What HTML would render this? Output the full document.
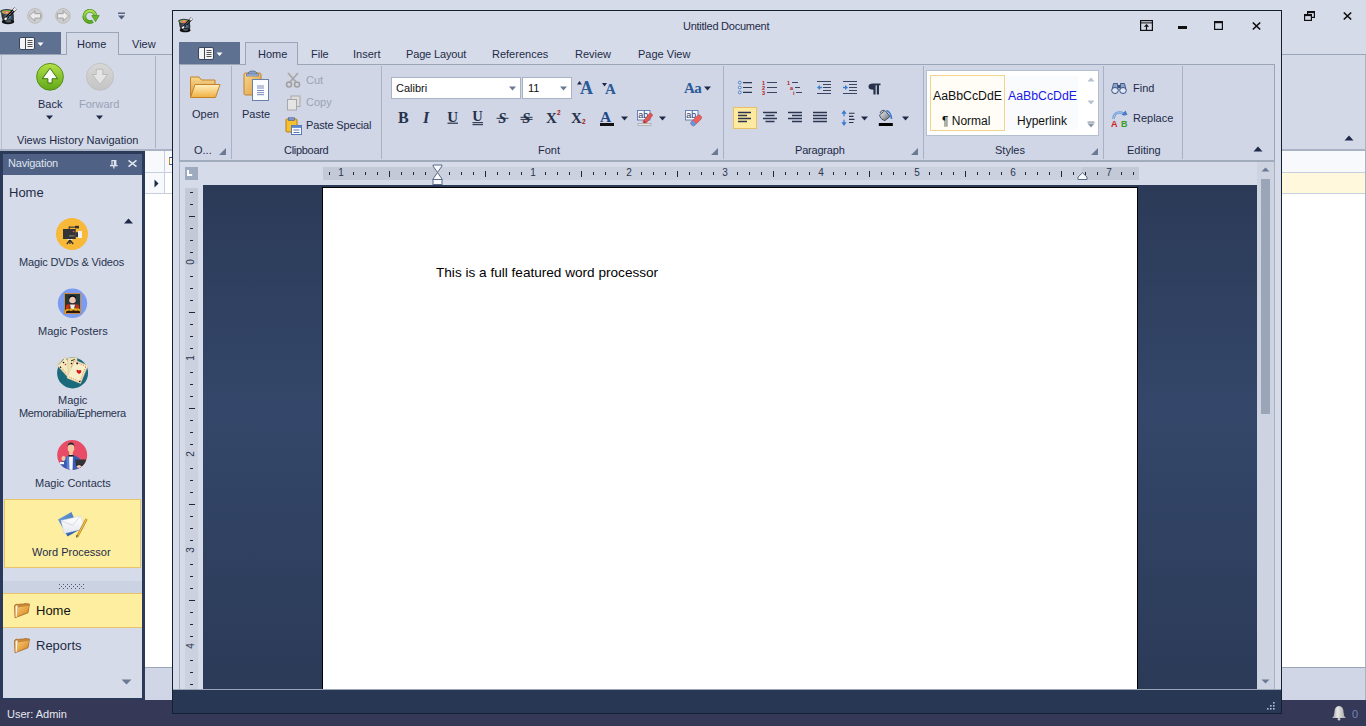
<!DOCTYPE html>
<html><head><meta charset="utf-8">
<style>
*{box-sizing:border-box;margin:0;padding:0}
html,body{width:1366px;height:726px;overflow:hidden;background:#d6dbe9;font-family:"Liberation Sans",sans-serif;font-size:11px;color:#1e2b48;position:relative}
.a{position:absolute}
.t{position:absolute;white-space:nowrap;line-height:1}
svg{position:absolute;overflow:visible}
</style></head><body>
<svg width="0" height="0" style="position:absolute"><defs><linearGradient id="fold" x1="0" y1="0" x2="1" y2="1"><stop offset="0" stop-color="#f8c870"/><stop offset="1" stop-color="#d88420"/></linearGradient></defs></svg>

<!-- ===== MAIN APP ===== -->
<!-- QAT -->
<svg style="left:0px;top:7px" width="18" height="18" viewBox="0 0 18 18">
 <defs><linearGradient id="hb0" x1="0" y1="0" x2="1" y2="0"><stop offset="0" stop-color="#1a1a1a"/><stop offset="0.55" stop-color="#6a8090"/><stop offset="1" stop-color="#202428"/></linearGradient>
 <radialGradient id="ht0" cx="0.5" cy="0.6" r="0.6"><stop offset="0" stop-color="#f0e0c0"/><stop offset="0.3" stop-color="#e85a70"/><stop offset="0.6" stop-color="#c8b040"/><stop offset="1" stop-color="#40a840"/></radialGradient></defs>
 <path d="M1 4.5 Q1.5 11 3 15 Q8 17.5 13.5 15 Q14.5 11 13 4.5 Z" fill="url(#hb0)"/>
 <ellipse cx="8" cy="14.8" rx="6.2" ry="2.4" fill="#111"/>
 <ellipse cx="8.5" cy="14.3" rx="3" ry="1.2" fill="#7890a0" opacity="0.6"/>
 <ellipse cx="6.8" cy="4.6" rx="6.6" ry="2.6" fill="#3a3e44"/>
 <ellipse cx="6.8" cy="5" rx="5.2" ry="1.9" fill="url(#ht0)"/>
 <line x1="4.8" y1="12.8" x2="15.6" y2="1.4" stroke="#0a0a0a" stroke-width="3"/>
 <line x1="5.2" y1="12.4" x2="15.2" y2="1.8" stroke="#e8e8e8" stroke-width="0.9" stroke-dasharray="1.2 0.8"/>
 <line x1="13.6" y1="3.5" x2="15.6" y2="1.4" stroke="#f4f4f4" stroke-width="2.4"/>
 <line x1="4.8" y1="12.8" x2="6.6" y2="10.9" stroke="#f4f4f4" stroke-width="2.2"/>
 <circle cx="10" cy="10" r="0.9" fill="#3a90e0"/>
</svg>
<svg style="left:27px;top:8px" width="16" height="16" viewBox="0 0 16 16">
 <circle cx="8" cy="7.9" r="7.4" fill="#cdcdcd" stroke="#b8b8b8" stroke-width="0.8"/>
 <path d="M2.3 7.9 L7.8 2.8 V5.7 H13.6 V10.1 H7.8 V13 Z" fill="#ececec" stroke="#9c9c9c" stroke-width="0.9"/>
</svg>
<svg style="left:55px;top:8px" width="16" height="16" viewBox="0 0 16 16">
 <circle cx="8" cy="7.9" r="7.4" fill="#cdcdcd" stroke="#b8b8b8" stroke-width="0.8"/>
 <path d="M13.7 7.9 L8.2 2.8 V5.7 H2.4 V10.1 H8.2 V13 Z" fill="#ececec" stroke="#9c9c9c" stroke-width="0.9"/>
</svg>
<svg style="left:82px;top:8px" width="18" height="17" viewBox="0 0 18 17">
 <defs><linearGradient id="rg" x1="0" y1="0" x2="0" y2="1"><stop offset="0" stop-color="#b0e050"/><stop offset="1" stop-color="#58a820"/></linearGradient></defs>
 <path d="M10.75 13.2 A5.6 5.6 0 1 1 13.4 7.2" stroke="#3e8a10" stroke-width="3.6" fill="none"/>
 <path d="M10.75 13.2 A5.6 5.6 0 1 1 13.4 7.2" stroke="url(#rg)" stroke-width="2.4" fill="none"/>
 <path d="M9.8 7.6 H17.2 L13.5 13.6 Z" fill="#6ab828" stroke="#3e8a10" stroke-width="0.7"/>
</svg>
<svg style="left:117px;top:12px" width="9" height="8" viewBox="0 0 9 8">
 <rect x="1" y="0.5" width="7" height="1.4" fill="#4f5f7a"/>
 <path d="M1 3.5 H8 L4.5 7.5 Z" fill="#4f5f7a"/>
</svg>

<!-- main tabs row -->
<div class="a" style="left:0;top:32px;width:61px;height:22px;background:#5f7190"></div>
<svg style="left:19px;top:37px" width="26" height="13" viewBox="0 0 26 13">
 <rect x="0.5" y="0.5" width="15" height="12" rx="1.5" fill="#f4f4f4" stroke="#3a4660" stroke-width="1"/>
 <rect x="6" y="1" width="1" height="11" fill="#3a4660"/>
 <rect x="8.5" y="3" width="5" height="1" fill="#555"/><rect x="8.5" y="5" width="5" height="1" fill="#555"/><rect x="8.5" y="7" width="5" height="1" fill="#555"/><rect x="8.5" y="9" width="5" height="1" fill="#555"/>
 <path d="M18.5 5.5 H24.5 L21.5 9 Z" fill="#fff"/>
</svg>
<div class="a" style="left:66px;top:32px;width:53px;height:23px;border:1px solid #9aa6b8;border-bottom:none;background:#d3d9e7"></div>
<div class="t" style="left:77px;top:39px">Home</div>
<div class="t" style="left:132px;top:39px">View</div>
<!-- main ribbon content -->
<div class="a" style="left:0;top:54px;width:66px;height:1px;background:#9aa6b8"></div>
<div class="a" style="left:119px;top:54px;width:1247px;height:1px;background:#9aa6b8"></div>
<div class="a" style="left:0;top:55px;width:1366px;height:94px;background:#d3d9e7"></div>
<div class="a" style="left:1px;top:55px;width:1px;height:94px;background:#b6bfce"></div>
<div class="a" style="left:155px;top:56px;width:1px;height:92px;background:#a8b2c2"></div>
<div class="a" style="left:0;top:149px;width:1366px;height:2px;background:#a9b3c4"></div>
<!-- back / forward big -->
<svg style="left:35px;top:62px" width="30" height="30" viewBox="0 0 30 30">
 <defs><linearGradient id="gg" x1="0" y1="0" x2="0" y2="1"><stop offset="0" stop-color="#b8e048"/><stop offset="0.5" stop-color="#88c430"/><stop offset="1" stop-color="#62a818"/></linearGradient></defs>
 <circle cx="15" cy="14.8" r="13.4" fill="url(#gg)" stroke="#4a8a12" stroke-width="0.9"/>
 <path d="M15 6.2 L22.6 16.7 H17.1 V21 H12.9 V16.7 H7.4 Z" fill="#fafcf6" stroke="#2e6a08" stroke-width="0.9" stroke-linejoin="miter"/>
</svg>
<svg style="left:85px;top:62px" width="30" height="30" viewBox="0 0 30 30">
 <defs><linearGradient id="gy" x1="0" y1="0" x2="0" y2="1"><stop offset="0" stop-color="#d8d8d8"/><stop offset="1" stop-color="#c4c4c4"/></linearGradient></defs>
 <circle cx="15" cy="14.8" r="13.5" fill="url(#gy)" stroke="#bcbcbc" stroke-width="0.8"/>
 <path d="M11.2 7.2 H17.8 V12.5 H22.7 L15 22.4 L7.3 12.5 H11.2 Z" fill="#e4e4e4" stroke="#b4b4b4" stroke-width="0.8"/>
</svg>
<div class="t" style="left:38px;top:99px">Back</div>
<div class="t" style="left:79px;top:99px;color:#9aa3b5">Forward</div>
<svg style="left:46px;top:115px" width="8" height="5" viewBox="0 0 8 5"><path d="M0 0.5 H7 L3.5 4.5 Z" fill="#1e2b48"/></svg>
<svg style="left:96px;top:115px" width="8" height="5" viewBox="0 0 8 5"><path d="M0 0.5 H7 L3.5 4.5 Z" fill="#1e2b48"/></svg>
<div class="t" style="left:17px;top:135px">Views History Navigation</div>

<!-- nav panel -->
<div class="a" style="left:0;top:151px;width:145px;height:549px;background:#2a3a58"></div>
<div class="a" style="left:3px;top:154px;width:139px;height:21px;background:#4f6184"></div>
<div class="t" style="left:8px;top:158px;color:#dfe5ef;letter-spacing:-0.2px">Navigation</div>
<svg style="left:109px;top:159px" width="10" height="11" viewBox="0 0 10 11">
 <rect x="2.4" y="1" width="5" height="5" fill="#dfe5ef"/>
 <rect x="3.6" y="2" width="1.2" height="4" fill="#4f6184"/>
 <rect x="1" y="6" width="7.6" height="1.3" fill="#dfe5ef"/>
 <rect x="4.2" y="7" width="1.3" height="2.5" fill="#dfe5ef"/>
</svg>
<svg style="left:128px;top:160px" width="9" height="7" viewBox="0 0 9 7"><path d="M0.5 0.3 L8.5 6.7 M8.5 0.3 L0.5 6.7" stroke="#dfe5ef" stroke-width="1.5"/></svg>
<div class="a" style="left:3px;top:175px;width:139px;height:523px;background:#d6dbe9"></div>
<div class="t" style="left:9px;top:186px;font-size:13px;color:#1e2b48">Home</div>
<svg style="left:124px;top:218px" width="10" height="6" viewBox="0 0 10 6"><path d="M0 5.5 H9 L4.5 0.5 Z" fill="#1e2b48"/></svg>

<!-- DVD icon -->
<svg style="left:56px;top:218px" width="32" height="32" viewBox="0 0 32 32">
 <circle cx="16" cy="16" r="16" fill="#f8b838"/>
 <rect x="7" y="11" width="12.7" height="10" fill="#333336"/>
 <rect x="19.5" y="14.2" width="2.6" height="4.8" fill="#333336"/>
 <path d="M22 13 H26 V20 H22 Z" fill="#eef0f2"/>
 <rect x="13" y="8.6" width="7" height="1.1" fill="#333336"/>
 <rect x="12.6" y="8.6" width="1.1" height="2.6" fill="#333336"/>
 <rect x="19" y="7.8" width="4" height="2.6" fill="#333336"/>
 <circle cx="17.6" cy="13.6" r="0.8" fill="#e06070"/>
 <rect x="13" y="17.4" width="5.5" height="1" fill="#8a8a8a"/>
 <rect x="11.5" y="21" width="5" height="1" fill="#f4f4f4"/>
 <path d="M14 22 L10.8 26 M14 22 V26 M14 22 L17.2 26" stroke="#333336" stroke-width="1.3" fill="none"/>
</svg>
<div class="t" style="left:19px;top:257px;color:#27344f;letter-spacing:-0.15px">Magic DVDs &amp; Videos</div>

<!-- Posters icon -->
<svg style="left:57px;top:288px" width="31" height="31" viewBox="0 0 31 31">
 <circle cx="15.5" cy="15.3" r="14.7" fill="#7c9cf0"/>
 <rect x="7" y="5" width="17" height="21" fill="#c8884a"/>
 <rect x="8" y="6" width="15" height="19" fill="#24383c"/>
 <path d="M11.5 9.5 Q15 5.5 19 9 L19 11 Q15 9.5 12 11Z" fill="#100808"/>
 <ellipse cx="15.5" cy="12.3" rx="3.2" ry="3.6" fill="#ecc4b4"/>
 <path d="M12.5 14 Q15.5 16.5 18.5 14 V15.5 Q15.5 17.5 12.5 15.5Z" fill="#3a2020"/>
 <path d="M9 17.5 Q11 15.5 13 16.5 L12 22 H9Z" fill="#c83010"/>
 <path d="M22 17.5 Q20 15.5 18 16.5 L19 22 H22Z" fill="#c83010"/>
 <path d="M13 16.5 H18 L17 21.5 H14Z" fill="#f0ece8"/>
 <path d="M8 22.5 Q10 19.5 12 21.5 Q14 19 16 21.5 Q18.5 19 20 21 Q21.5 19.5 23 21.5 V25 H8Z" fill="#e8a818"/>
 <path d="M9 23.5 Q12 21.8 14 23 Q17 21.5 19 23 Q21 22 23 23.5 V25 H9Z" fill="#2a1a10"/>
</svg>
<div class="t" style="left:38px;top:326px;color:#27344f">Magic Posters</div>

<!-- Memorabilia icon -->
<svg style="left:54px;top:354px" width="36" height="36" viewBox="0 0 36 36">
 <circle cx="18.6" cy="18.9" r="15.5" fill="#1b6a7c"/>
 <path d="M10.5 3.2 L21.5 15 L14 23.5 L3 11 Z" fill="#f4eac0" stroke="#c8b888" stroke-width="0.5"/>
 <path d="M9.8 5 L4.5 11" stroke="#222" stroke-width="0.8" stroke-dasharray="0.8 0.8"/>
 <path d="M6 12 L13.5 21" stroke="#e04040" stroke-width="0.7" stroke-dasharray="0.9 1.1"/>
 <circle cx="9.5" cy="8.5" r="0.8" fill="#111"/><circle cx="6.5" cy="13.3" r="0.7" fill="#111"/>
 <path d="M13.5 4 L23 3.5 L23.5 22 L14.5 24 Z" fill="#efe4b4" stroke="#c8b888" stroke-width="0.5"/>
 <circle cx="17.5" cy="9.5" r="0.8" fill="#111"/><circle cx="11.5" cy="10.5" r="0.8" fill="#d03030"/>
 <path d="M17 6.8 L21 5.5" stroke="#222" stroke-width="0.9"/>
 <path d="M20.5 6 L34 11.5 L26.5 29.5 L13 24 Z" fill="#f7efc8" stroke="#d8c898" stroke-width="0.5"/>
 <path d="M21.8 8 L32 12.3 L25.8 27.6 L15 23" fill="none" stroke="#e03838" stroke-width="0.7" stroke-dasharray="0.9 1.1"/>
 <path d="M17.3 13.2 L20.5 6.5" stroke="#e03838" stroke-width="0.7" stroke-dasharray="0.9 1.1"/>
 <path d="M24.6 16.5 q-1.4 -1.6 -2.2 0 q-0.3 1.6 2.6 3.4 q2.6 -1.2 2.4 -3 q-0.8 -1.5 -2.8 -0.4Z" fill="#d81818"/>
 <circle cx="23.2" cy="9.4" r="0.9" fill="#111"/><circle cx="25.8" cy="27.5" r="0.8" fill="#111"/>
</svg>
<div class="t" style="left:58px;top:395px;color:#27344f">Magic</div>
<div class="t" style="left:19px;top:408px;color:#27344f;letter-spacing:-0.35px">Memorabilia/Ephemera</div>

<!-- Contacts icon -->
<svg style="left:57px;top:440px" width="31" height="31" viewBox="0 0 31 31">
 <defs><clipPath id="cc"><circle cx="15.2" cy="15" r="15"/></clipPath></defs>
 <circle cx="15.2" cy="15" r="15" fill="#e84c66"/>
 <g clip-path="url(#cc)">
 <path d="M6 31 L5 23 Q8 16.5 12 15.5 L18 15.5 Q22 17 24 21 L25 31 Z" fill="#3a5ab8"/>
 <path d="M9.5 17 L12 15.5 L13 31 L10 31Z" fill="#5a80d0"/>
 <path d="M12 15.5 H16 L15.5 31 H12.5 Z" fill="#fafafa"/>
 <rect x="11.5" y="14.8" width="5" height="1.8" fill="#1a1a1a"/>
 <rect x="12.2" y="11" width="3.6" height="4" fill="#f2c8a0"/>
 <ellipse cx="14" cy="8" rx="3.3" ry="4.3" fill="#f2c8a0"/>
 <path d="M10.6 7 Q10.5 2.6 14 2.4 Q17.5 2.4 17.4 7 L16.5 5 Q14 4.2 11.5 5 Z" fill="#222830"/>
 <path d="M4 28 L3 23 L7 19.5 L9 21 L7 26Z" fill="#3a5ab8"/>
 <rect x="3" y="22" width="4" height="2.2" fill="#fafafa"/>
 <ellipse cx="6.5" cy="18.5" rx="2" ry="2.4" fill="#f2c8a0"/>
 <path d="M18 19.5 H29 L28 25 H19 Z" fill="#303438"/>
 <rect x="19" y="24.8" width="9" height="1" fill="#1a1a1a"/>
 <ellipse cx="22" cy="26.5" rx="2.2" ry="1.5" fill="#f2c8a0"/>
 </g>
</svg>
<div class="t" style="left:35px;top:478px;color:#27344f">Magic Contacts</div>

<!-- selected Word Processor -->
<div class="a" style="left:4px;top:499px;width:137px;height:69px;background:#fdeea0;border:1px solid #e7c46a"></div>
<svg style="left:52px;top:506px" width="40" height="40" viewBox="0 0 40 40">
 <defs><linearGradient id="wpb" x1="0" y1="0" x2="1" y2="1"><stop offset="0" stop-color="#7aa8e0"/><stop offset="1" stop-color="#1a4aa0"/></linearGradient>
 <linearGradient id="wpe" x1="0" y1="0" x2="0" y2="1"><stop offset="0" stop-color="#ffffff"/><stop offset="1" stop-color="#e4e8f0"/></linearGradient></defs>
 <path d="M6 13.5 L19.5 6 L27 24 L15.5 30.5 Z" fill="url(#wpb)"/>
 <path d="M9 14.5 L28.5 10 L33 22.5 L12 27.5 Z" fill="url(#wpe)" stroke="#c8d0dc" stroke-width="0.5"/>
 <path d="M9 14.5 L20.5 19.5 L28.5 10" stroke="#d0d6e0" stroke-width="0.8" fill="none"/>
 <path d="M34.5 13 L25 31" stroke="#a87818" stroke-width="2.4"/>
 <path d="M34.5 13 L25 31" stroke="#f0c040" stroke-width="1.3"/>
 <path d="M25.8 29.5 L24.3 32.2 L24.6 29" fill="#333"/>
</svg>
<div class="t" style="left:32px;top:547px;color:#1e2b48">Word Processor</div>

<!-- splitter -->
<div class="a" style="left:3px;top:581px;width:139px;height:12px;background:#cbd2e2"></div>
<svg style="left:58px;top:583px" width="30" height="8" viewBox="0 0 30 8" shape-rendering="crispEdges"><g fill="#4e5a74"><rect x="1" y="1" width="1" height="1"/><rect x="5" y="1" width="1" height="1"/><rect x="9" y="1" width="1" height="1"/><rect x="13" y="1" width="1" height="1"/><rect x="17" y="1" width="1" height="1"/><rect x="21" y="1" width="1" height="1"/><rect x="25" y="1" width="1" height="1"/><rect x="3" y="3" width="1" height="1"/><rect x="7" y="3" width="1" height="1"/><rect x="11" y="3" width="1" height="1"/><rect x="15" y="3" width="1" height="1"/><rect x="19" y="3" width="1" height="1"/><rect x="23" y="3" width="1" height="1"/><rect x="1" y="5" width="1" height="1"/><rect x="5" y="5" width="1" height="1"/><rect x="9" y="5" width="1" height="1"/><rect x="13" y="5" width="1" height="1"/><rect x="17" y="5" width="1" height="1"/><rect x="21" y="5" width="1" height="1"/><rect x="25" y="5" width="1" height="1"/></g></svg>

<!-- Home selected -->
<div class="a" style="left:3px;top:593px;width:139px;height:35px;background:#fdeea0;border-top:1px solid #e7c46a;border-bottom:1px solid #e7c46a"></div>
<svg style="left:13px;top:601px" width="18" height="18" viewBox="0 0 18 18">
 <path d="M1.5 4.5 L3 3.2 L6 3.5 L7.5 3 L10 3.2 L11.5 2.5 L14 2.8 L16.5 3 L15 11.8 L2 16.8 Z" fill="#c88838" stroke="#a86a28" stroke-width="0.8"/>
 <path d="M2.5 5 L4.5 4.2 L4.5 15.5 L2.6 16 Z" fill="#fff8e8"/>
 <path d="M4.8 6.5 L16 4.8 L14.3 11.3 L3.6 15.6 Z" fill="url(#fold)"/>
</svg>
<div class="t" style="left:36px;top:604px;font-size:13px;color:#111">Home</div>
<svg style="left:13px;top:636px" width="18" height="18" viewBox="0 0 18 18">
 <path d="M1.5 4.5 L3 3.2 L6 3.5 L7.5 3 L10 3.2 L11.5 2.5 L14 2.8 L16.5 3 L15 11.8 L2 16.8 Z" fill="#c88838" stroke="#a86a28" stroke-width="0.8"/>
 <path d="M2.5 5 L4.5 4.2 L4.5 15.5 L2.6 16 Z" fill="#fff8e8"/>
 <path d="M4.8 6.5 L16 4.8 L14.3 11.3 L3.6 15.6 Z" fill="url(#fold)"/>
</svg>
<div class="t" style="left:36px;top:639px;font-size:13px;color:#1e2b48">Reports</div>
<svg style="left:121px;top:679px" width="11" height="6" viewBox="0 0 11 6"><path d="M0.5 0.5 H10.5 L5.5 5.5 Z" fill="#6a7a94"/></svg>

<!-- middle grid -->
<div class="a" style="left:145px;top:151px;width:27px;height:516px;background:#fff"></div>
<div class="a" style="left:145px;top:151px;width:27px;height:21px;background:#f7f9fc"></div>
<div class="a" style="left:169px;top:157px;width:3px;height:8px;border:1px solid #2a5ab0;border-right:none;border-left-color:#d08a30"></div>
<div class="a" style="left:145px;top:172px;width:27px;height:1px;background:#c8cfdc"></div>
<div class="a" style="left:145px;top:173px;width:19px;height:21px;background:#f7f9fc"></div>
<div class="a" style="left:145px;top:193px;width:27px;height:1px;background:#c8cfdc"></div>
<div class="a" style="left:164px;top:151px;width:1px;height:43px;background:#c8cfdc"></div>
<svg style="left:154px;top:179px" width="5" height="9" viewBox="0 0 5 9"><path d="M0.5 0.5 L4.5 4.5 L0.5 8.5Z" fill="#1e2b48"/></svg>
<div class="a" style="left:145px;top:667px;width:27px;height:1px;background:#9aa6b8"></div>
<div class="a" style="left:145px;top:668px;width:27px;height:32px;background:#d0d6e6"></div>

<!-- right pane -->
<div class="a" style="left:1282px;top:151px;width:84px;height:516px;background:#fff"></div>
<div class="a" style="left:1282px;top:151px;width:84px;height:21px;background:#f7f9fc"></div>
<div class="a" style="left:1282px;top:172px;width:84px;height:1px;background:#c8cfdc"></div>
<div class="a" style="left:1282px;top:173px;width:84px;height:20px;background:#fff8dc"></div>
<div class="a" style="left:1282px;top:193px;width:84px;height:1px;background:#c8cfdc"></div>
<div class="a" style="left:1365px;top:55px;width:1px;height:645px;background:#a9b3c4"></div>
<div class="a" style="left:1282px;top:667px;width:84px;height:1px;background:#9aa6b8"></div>
<div class="a" style="left:1282px;top:668px;width:83px;height:32px;background:#d0d6e6"></div>
<svg style="left:1344px;top:135px" width="10" height="6" viewBox="0 0 10 6"><path d="M0.5 5.5 H9.5 L5 0.5 Z" fill="#1e2b48"/></svg>
<!-- main window buttons -->
<svg style="left:1304px;top:11px" width="11" height="10" viewBox="0 0 11 10">
 <rect x="3.6" y="0.6" width="6.8" height="5.8" fill="none" stroke="#111" stroke-width="1.2"/>
 <rect x="3.6" y="0.6" width="6.8" height="1.5" fill="#111"/>
 <rect x="0.6" y="3.6" width="6.8" height="5.8" fill="#d6dbe9" stroke="#111" stroke-width="1.2"/>
 <rect x="0.6" y="3.6" width="6.8" height="1.5" fill="#111"/>
</svg>
<svg style="left:1343px;top:12px" width="9" height="8" viewBox="0 0 9 8"><path d="M0.8 0.5 L8.2 7.5 M8.2 0.5 L0.8 7.5" stroke="#111" stroke-width="1.7"/></svg>

<!-- status bar -->
<div class="a" style="left:0;top:700px;width:1366px;height:26px;background:#363857"></div>
<div class="t" style="left:7px;top:709px;color:#e6e8f0">User: Admin</div>
<svg style="left:1331px;top:705px" width="16" height="16" viewBox="0 0 16 16">
 <defs><linearGradient id="bell" x1="0" y1="0" x2="1" y2="0"><stop offset="0" stop-color="#9a9a9a"/><stop offset="0.4" stop-color="#e8e8e8"/><stop offset="1" stop-color="#a0a0a0"/></linearGradient></defs>
 <path d="M8 1 Q12.5 1.5 12.5 7 Q12.5 11 15 13 H1 Q3.5 11 3.5 7 Q3.5 1.5 8 1Z" fill="url(#bell)"/>
 <circle cx="8" cy="14.3" r="1.3" fill="#ccc"/>
</svg>
<div class="t" style="left:1352px;top:709px;color:#7088b8">0</div>

<!-- ===== INNER WINDOW ===== -->
<div class="a" style="left:172px;top:10px;width:1110px;height:704px;background:#d6dbe9;border:1px solid #132032"></div>
<svg style="left:178px;top:17px" width="16" height="16" viewBox="0 0 18 18">
 <defs><linearGradient id="hb179" x1="0" y1="0" x2="1" y2="0"><stop offset="0" stop-color="#1a1a1a"/><stop offset="0.55" stop-color="#6a8090"/><stop offset="1" stop-color="#202428"/></linearGradient>
 <radialGradient id="ht179" cx="0.5" cy="0.6" r="0.6"><stop offset="0" stop-color="#f0e0c0"/><stop offset="0.3" stop-color="#e85a70"/><stop offset="0.6" stop-color="#c8b040"/><stop offset="1" stop-color="#40a840"/></radialGradient></defs>
 <path d="M1 4.5 Q1.5 11 3 15 Q8 17.5 13.5 15 Q14.5 11 13 4.5 Z" fill="url(#hb179)"/>
 <ellipse cx="8" cy="14.8" rx="6.2" ry="2.4" fill="#111"/>
 <ellipse cx="8.5" cy="14.3" rx="3" ry="1.2" fill="#7890a0" opacity="0.6"/>
 <ellipse cx="6.8" cy="4.6" rx="6.6" ry="2.6" fill="#3a3e44"/>
 <ellipse cx="6.8" cy="5" rx="5.2" ry="1.9" fill="url(#ht179)"/>
 <line x1="4.8" y1="12.8" x2="15.6" y2="1.4" stroke="#0a0a0a" stroke-width="3"/>
 <line x1="5.2" y1="12.4" x2="15.2" y2="1.8" stroke="#e8e8e8" stroke-width="0.9" stroke-dasharray="1.2 0.8"/>
 <line x1="13.6" y1="3.5" x2="15.6" y2="1.4" stroke="#f4f4f4" stroke-width="2.4"/>
 <line x1="4.8" y1="12.8" x2="6.6" y2="10.9" stroke="#f4f4f4" stroke-width="2.2"/>
 <circle cx="10" cy="10" r="0.9" fill="#3a90e0"/>
</svg>
<div class="t" style="left:683px;top:21px;color:#1e2b48;letter-spacing:-0.25px">Untitled Document</div>
<!-- title buttons -->
<svg style="left:1140px;top:20px" width="13" height="11" viewBox="0 0 13 11">
 <rect x="0.6" y="0.6" width="11.8" height="9.8" fill="none" stroke="#111" stroke-width="1.2"/>
 <rect x="0.6" y="2.4" width="11.8" height="1" fill="#111"/>
 <path d="M6.5 4 L3.8 6.8 H5.9 V10 H7.1 V6.8 H9.2 Z" fill="#111"/>
</svg>
<div class="a" style="left:1178px;top:26px;width:9px;height:3px;background:#111"></div>
<svg style="left:1214px;top:21px" width="9" height="9" viewBox="0 0 9 9">
 <rect x="0.6" y="0.6" width="7.8" height="7.8" fill="none" stroke="#111" stroke-width="1.2"/>
 <rect x="0.6" y="0.6" width="7.8" height="1.6" fill="#111"/>
</svg>
<svg style="left:1252px;top:22px" width="9" height="8" viewBox="0 0 9 8"><path d="M0.8 0.5 L8.2 7.5 M8.2 0.5 L0.8 7.5" stroke="#111" stroke-width="1.7"/></svg>

<!-- inner tabs -->
<div class="a" style="left:179px;top:42px;width:61px;height:22px;background:#5f7190"></div>
<svg style="left:198px;top:47px" width="26" height="13" viewBox="0 0 26 13">
 <rect x="0.5" y="0.5" width="15" height="12" rx="1.5" fill="#f4f4f4" stroke="#3a4660" stroke-width="1"/>
 <rect x="6" y="1" width="1" height="11" fill="#3a4660"/>
 <rect x="8.5" y="3" width="5" height="1" fill="#555"/><rect x="8.5" y="5" width="5" height="1" fill="#555"/><rect x="8.5" y="7" width="5" height="1" fill="#555"/><rect x="8.5" y="9" width="5" height="1" fill="#555"/>
 <path d="M18.5 5.5 H24.5 L21.5 9 Z" fill="#fff"/>
</svg>
<div class="a" style="left:245px;top:42px;width:53px;height:23px;border:1px solid #9aa6b8;border-bottom:none;background:#d0d6e6;z-index:2"></div>
<div class="t" style="left:258px;top:49px;z-index:3">Home</div>
<div class="t" style="left:311px;top:49px">File</div>
<div class="t" style="left:353px;top:49px">Insert</div>
<div class="t" style="left:406px;top:49px;letter-spacing:-0.15px">Page Layout</div>
<div class="t" style="left:492px;top:49px">References</div>
<div class="t" style="left:575px;top:49px">Review</div>
<div class="t" style="left:638px;top:49px">Page View</div>

<!-- inner ribbon content -->
<div class="a" style="left:179px;top:64px;width:1096px;height:98px;background:#d0d6e6;border:1px solid #9aa6b8;border-bottom:2px solid #a0abbc"></div>
<!-- separators -->
<div class="a" style="left:231px;top:66px;width:1px;height:93px;background:#a8b2c2"></div>
<div class="a" style="left:381px;top:66px;width:1px;height:93px;background:#a8b2c2"></div>
<div class="a" style="left:723px;top:66px;width:1px;height:93px;background:#a8b2c2"></div>
<div class="a" style="left:923px;top:66px;width:1px;height:93px;background:#a8b2c2"></div>
<div class="a" style="left:1103px;top:66px;width:1px;height:93px;background:#a8b2c2"></div>
<div class="a" style="left:1182px;top:66px;width:1px;height:93px;background:#a8b2c2"></div>

<!-- group: Open -->
<svg style="left:189px;top:75px" width="32" height="24" viewBox="0 0 32 24">
 <defs>
  <linearGradient id="fb" x1="0" y1="0" x2="0" y2="1"><stop offset="0" stop-color="#f8d890"/><stop offset="1" stop-color="#d89838"/></linearGradient>
  <linearGradient id="ff" x1="0" y1="0" x2="0" y2="1"><stop offset="0" stop-color="#fff0c0"/><stop offset="1" stop-color="#f0b040"/></linearGradient>
 </defs>
 <path d="M1.5 2 H10 L12.5 5 H26 V21.5 H1.5 Z" fill="url(#fb)" stroke="#c48228" stroke-width="1"/>
 <path d="M6 9.5 H31 L26.5 22.5 H1.5 Z" fill="url(#ff)" stroke="#c48228" stroke-width="1"/>
</svg>
<div class="t" style="left:192px;top:109px">Open</div>
<div class="t" style="left:194px;top:145px">O...</div>
<svg style="left:219px;top:148px" width="7" height="7" viewBox="0 0 7 7"><path d="M7 0 V7 H0 Z" fill="#6a7a94"/></svg>

<!-- group: Clipboard -->
<svg style="left:243px;top:70px" width="27" height="32" viewBox="0 0 27 32">
 <defs><linearGradient id="cb" x1="0" y1="0" x2="1" y2="1"><stop offset="0" stop-color="#f8d890"/><stop offset="1" stop-color="#dc9c40"/></linearGradient></defs>
 <rect x="1" y="3" width="17" height="22" rx="1.5" fill="url(#cb)" stroke="#c08030" stroke-width="1"/>
 <path d="M5 4.5 Q5 1 9.5 1 Q14 1 14 4.5 Z" fill="#8aa0c8" stroke="#506890" stroke-width="0.8"/>
 <rect x="3.5" y="4" width="12" height="2" fill="#a8bce0" stroke="#506890" stroke-width="0.6"/>
 <rect x="9.5" y="9.5" width="16" height="21" fill="#fbfcfe" stroke="#6a80a8" stroke-width="1"/>
 <path d="M14 16 H21 M14 18 H21 M14 20.5 H21 M14 22.7 H21 M14 24.7 H21" stroke="#6a80b8" stroke-width="0.9"/>
</svg>
<div class="t" style="left:242px;top:109px">Paste</div>
<svg style="left:285px;top:72px" width="16" height="16" viewBox="0 0 16 16">
 <path d="M3 1 L11 10 M13 1 L5 10" stroke="#a8a8a8" stroke-width="1.8"/>
 <circle cx="4" cy="12.5" r="2.5" fill="none" stroke="#a0a0a0" stroke-width="1.6"/>
 <circle cx="12" cy="12.5" r="2.5" fill="none" stroke="#a0a0a0" stroke-width="1.6"/>
</svg>
<div class="t" style="left:306px;top:75px;color:#9aa3b5">Cut</div>
<svg style="left:286px;top:95px" width="15" height="16" viewBox="0 0 15 16">
 <rect x="5" y="1" width="9" height="10.5" fill="#dcdcdc" stroke="#a8a8a8" stroke-width="1"/>
 <rect x="1.5" y="4.5" width="9" height="10.5" fill="#e4e4e4" stroke="#a8a8a8" stroke-width="1"/>
</svg>
<div class="t" style="left:306px;top:97px;color:#9aa3b5">Copy</div>
<svg style="left:285px;top:117px" width="17" height="18" viewBox="0 0 17 18">
 <rect x="1" y="2" width="11" height="13" rx="1" fill="#f4c030" stroke="#b88018" stroke-width="1"/>
 <rect x="3.5" y="0.8" width="6" height="2.5" fill="#7a9ad0" stroke="#405890" stroke-width="0.6"/>
 <rect x="6.5" y="8.5" width="10" height="9" fill="#fafcff" stroke="#5a78b0" stroke-width="1"/>
 <rect x="6.5" y="8.5" width="10" height="2.4" fill="#5a88d0"/>
 <path d="M8.5 13 H14.5 M8.5 15.5 H14.5" stroke="#5a78b0" stroke-width="1"/>
</svg>
<div class="t" style="left:306px;top:120px;letter-spacing:-0.15px">Paste Special</div>
<div class="t" style="left:284px;top:145px;letter-spacing:-0.3px">Clipboard</div>

<!-- group: Font -->
<div class="a" style="left:391px;top:77px;width:130px;height:22px;background:#fff;border:1px solid #a8b4c6"></div>
<div class="t" style="left:396px;top:83px;color:#111">Calibri</div>
<svg style="left:509px;top:86px" width="7" height="5" viewBox="0 0 7 5"><path d="M0 0.5 H7 L3.5 4.5 Z" fill="#6a7a94"/></svg>
<div class="a" style="left:522px;top:77px;width:50px;height:22px;background:#fff;border:1px solid #a8b4c6"></div>
<div class="t" style="left:528px;top:83px;color:#111">11</div>
<svg style="left:560px;top:86px" width="7" height="5" viewBox="0 0 7 5"><path d="M0 0.5 H7 L3.5 4.5 Z" fill="#6a7a94"/></svg>
<!-- grow/shrink -->
<div class="t" style="left:580px;top:79px;font-family:'Liberation Serif',serif;font-weight:bold;font-size:18px;color:#2a5a98">A</div>
<svg style="left:577px;top:81px" width="5" height="4" viewBox="0 0 5 4"><path d="M0 3.5 H5 L2.5 0Z" fill="#1e2b48"/></svg>
<div class="t" style="left:605px;top:82px;font-family:'Liberation Serif',serif;font-weight:bold;font-size:15px;color:#2a5a98">A</div>
<svg style="left:602px;top:83px" width="5" height="4" viewBox="0 0 5 4"><path d="M0 0 H5 L2.5 3.5Z" fill="#1e2b48"/></svg>
<div class="t" style="left:684px;top:81px;font-family:'Liberation Serif',serif;font-weight:bold;font-size:15px;color:#2a5a98;letter-spacing:-0.5px">Aa</div>
<svg style="left:704px;top:86px" width="7" height="5" viewBox="0 0 7 5"><path d="M0 0.5 H7 L3.5 4.5 Z" fill="#1e2b48"/></svg>
<!-- row 2 -->
<div class="t" style="left:398px;top:110px;font-family:'Liberation Serif',serif;font-weight:bold;font-size:16px;color:#27324a">B</div>
<div class="t" style="left:423px;top:110px;font-family:'Liberation Serif',serif;font-weight:bold;font-style:italic;font-size:16px;color:#27324a">I</div>
<svg style="left:447px;top:110px" width="12" height="14" viewBox="0 0 12 14">
 <text x="0.3" y="11.6" font-family="Liberation Serif" font-weight="bold" font-size="15" fill="#27324a">U</text>
 <rect x="0.5" y="12.6" width="10.5" height="1.2" fill="#27324a"/>
</svg>
<svg style="left:472px;top:110px" width="12" height="15" viewBox="0 0 12 15">
 <text x="0.3" y="11.2" font-family="Liberation Serif" font-weight="bold" font-size="14.5" fill="#27324a">U</text>
 <rect x="0.5" y="12.1" width="10.5" height="1.1" fill="#27324a"/><rect x="0.5" y="14.1" width="10.5" height="1.1" fill="#27324a"/>
</svg>
<svg style="left:496px;top:111px" width="14" height="13" viewBox="0 0 14 13">
 <text x="2.2" y="12" font-family="Liberation Serif" font-weight="bold" font-style="italic" font-size="14.5" fill="#27324a">S</text>
 <rect x="0.5" y="6.8" width="12" height="1" fill="#27324a"/>
</svg>
<svg style="left:520px;top:111px" width="14" height="13" viewBox="0 0 14 13">
 <text x="2.2" y="12" font-family="Liberation Serif" font-weight="bold" font-style="italic" font-size="14.5" fill="#27324a">S</text>
 <rect x="0.5" y="5.8" width="12" height="1" fill="#27324a"/><rect x="0.5" y="7.9" width="12" height="1" fill="#27324a"/>
</svg>
<div class="t" style="left:546px;top:111px;font-family:'Liberation Serif',serif;font-weight:bold;font-size:15px;color:#27324a">X</div>
<div class="t" style="left:557px;top:110px;font-family:'Liberation Sans',sans-serif;font-weight:bold;font-size:6.5px;color:#a81414">2</div>
<div class="t" style="left:571px;top:111px;font-family:'Liberation Serif',serif;font-weight:bold;font-size:15px;color:#27324a">X</div>
<div class="t" style="left:582px;top:119px;font-family:'Liberation Sans',sans-serif;font-weight:bold;font-size:6.5px;color:#a81414">2</div>
<div class="t" style="left:600px;top:109px;font-family:'Liberation Serif',serif;font-weight:bold;font-size:15.5px;color:#1e4a88">A</div>
<div class="a" style="left:600px;top:123px;width:14px;height:3px;background:#111"></div>
<svg style="left:621px;top:116px" width="7" height="5" viewBox="0 0 7 5"><path d="M0 0.5 H7 L3.5 4.5 Z" fill="#1e2b48"/></svg>
<svg style="left:637px;top:110px" width="17" height="17" viewBox="0 0 17 17">
 <rect x="0.5" y="0.5" width="12.5" height="9.5" fill="#f4f7fc" stroke="#5a78b0" stroke-width="0.9"/>
 <text x="1.2" y="8.3" font-size="9" font-family="Liberation Sans" fill="#2a3a70">ab</text>
 <g transform="rotate(-50 11 8)"><rect x="4.5" y="6.3" width="12" height="3.6" rx="1.2" fill="#e05858" stroke="#b03030" stroke-width="0.5"/></g>
 <path d="M7.8 10.5 L6.5 13 L9 12Z" fill="#c02020"/>
 <rect x="1" y="13.5" width="13" height="2" fill="#e8e8e8" stroke="#a0a0a0" stroke-width="0.7"/>
</svg>
<svg style="left:659px;top:116px" width="7" height="5" viewBox="0 0 7 5"><path d="M0 0.5 H7 L3.5 4.5 Z" fill="#1e2b48"/></svg>
<svg style="left:685px;top:110px" width="18" height="17" viewBox="0 0 18 17">
 <rect x="0.5" y="0.5" width="12.5" height="9.5" fill="#f4f7fc" stroke="#5a78b0" stroke-width="0.9"/>
 <text x="1.2" y="8.3" font-size="9" font-family="Liberation Sans" fill="#2a3a70">ab</text>
 <g transform="rotate(-45 11 11)"><rect x="5" y="8.2" width="13" height="5" rx="2.2" fill="#e86060" stroke="#b83838" stroke-width="0.5"/><path d="M7.2 8.2 H9 V13.2 H7.2 A2.2 2.5 0 0 1 7.2 8.2Z" fill="#5a9ae8"/></g>
</svg>
<div class="t" style="left:538px;top:145px">Font</div>
<svg style="left:711px;top:148px" width="7" height="7" viewBox="0 0 7 7"><path d="M7 0 V7 H0 Z" fill="#6a7a94"/></svg>

<!-- group: Paragraph -->
<svg style="left:737px;top:80px" width="16" height="15" viewBox="0 0 16 15">
 <circle cx="2.8" cy="2.6" r="1.4" fill="#e8f0fc" stroke="#3a70c0" stroke-width="0.9"/><circle cx="2.8" cy="7.5" r="1.4" fill="#e8f0fc" stroke="#3a70c0" stroke-width="0.9"/><circle cx="2.8" cy="12.4" r="1.4" fill="#e8f0fc" stroke="#3a70c0" stroke-width="0.9"/>
 <path d="M6 2.6 H15 M6 7.5 H15 M6 12.4 H15" stroke="#2a3550" stroke-width="1.2"/>
</svg>
<svg style="left:762px;top:80px" width="16" height="15" viewBox="0 0 16 15">
 <text x="0" y="5" font-size="5.5" font-weight="bold" font-family="Liberation Sans" fill="#b02020">1</text>
 <text x="0" y="10" font-size="5.5" font-weight="bold" font-family="Liberation Sans" fill="#b02020">2</text>
 <text x="0" y="15" font-size="5.5" font-weight="bold" font-family="Liberation Sans" fill="#b02020">3</text>
 <path d="M5 2.5 H15 M5 7.5 H15 M5 12.5 H15" stroke="#3a4660" stroke-width="1.2"/>
</svg>
<svg style="left:787px;top:80px" width="16" height="15" viewBox="0 0 16 15">
 <text x="0" y="5" font-size="5.5" font-weight="bold" font-family="Liberation Sans" fill="#b02020">1</text>
 <text x="3" y="10" font-size="5.5" font-weight="bold" font-family="Liberation Sans" fill="#b02020">a</text>
 <text x="6" y="15" font-size="5.5" font-weight="bold" font-family="Liberation Sans" fill="#b02020">i</text>
 <path d="M5 2.5 H11 M8 7.5 H13 M9 12.5 H15" stroke="#3a4660" stroke-width="1.2"/>
</svg>
<svg style="left:816px;top:80px" width="16" height="15" viewBox="0 0 16 15">
 <path d="M1 1.5 H15 M7 4.5 H15 M7 7.5 H15 M7 10.5 H15 M1 13.5 H15" stroke="#3a4660" stroke-width="1.2"/>
 <path d="M1 7.5 L4 5 V10 Z" fill="#3a80d0"/><rect x="3" y="6.8" width="3" height="1.4" fill="#3a80d0"/>
</svg>
<svg style="left:842px;top:80px" width="16" height="15" viewBox="0 0 16 15">
 <path d="M1 1.5 H15 M7 4.5 H15 M7 7.5 H15 M7 10.5 H15 M1 13.5 H15" stroke="#3a4660" stroke-width="1.2"/>
 <path d="M6 7.5 L3 5 V10 Z" fill="#3a80d0"/><rect x="1" y="6.8" width="3" height="1.4" fill="#3a80d0"/>
</svg>
<svg style="left:868px;top:83px" width="13" height="12" viewBox="0 0 13 12">
 <path d="M5 0.5 H12.5 V2.2 H11 V11.5 H8.8 V2.2 H7.6 V11.5 H5.4 V6.8 Q0.5 6.8 0.5 3.6 Q0.5 0.5 5 0.5Z" fill="#27324a"/>
</svg>
<!-- row 2 paragraph -->
<div class="a" style="left:733px;top:107px;width:24px;height:22px;background:#fde9a0;border:1px solid #e8c060"></div>
<svg style="left:738px;top:111px" width="14" height="13" viewBox="0 0 14 13"><path d="M0 1.5 H13 M0 4.5 H9 M0 7.5 H13 M0 10.5 H9" stroke="#2a3550" stroke-width="1.3"/></svg>
<svg style="left:763px;top:111px" width="14" height="13" viewBox="0 0 14 13"><path d="M0 1.5 H14 M2.5 4.5 H11.5 M0 7.5 H14 M2.5 10.5 H11.5" stroke="#2a3550" stroke-width="1.3"/></svg>
<svg style="left:788px;top:111px" width="14" height="13" viewBox="0 0 14 13"><path d="M0 1.5 H14 M4 4.5 H14 M0 7.5 H14 M4 10.5 H14" stroke="#2a3550" stroke-width="1.3"/></svg>
<svg style="left:813px;top:111px" width="14" height="13" viewBox="0 0 14 13"><path d="M0 1.5 H14 M0 4.5 H14 M0 7.5 H14 M0 10.5 H14" stroke="#2a3550" stroke-width="1.3"/></svg>
<svg style="left:841px;top:110px" width="17" height="17" viewBox="0 0 17 17">
 <path d="M3 0 L5.6 3.8 H0.4 Z M3 16 L5.6 12.2 H0.4 Z" fill="#3a78d0"/>
 <rect x="2.4" y="3" width="1.2" height="3.4" fill="#3a78d0"/><rect x="2.4" y="9.6" width="1.2" height="3.4" fill="#3a78d0"/>
 <path d="M8 3.3 H13.5 M8 6.4 H12.5 M8 9.4 H13.5 M8 12.5 H12.5" stroke="#27324a" stroke-width="1.1"/>
</svg>
<svg style="left:861px;top:116px" width="7" height="5" viewBox="0 0 7 5"><path d="M0 0.5 H7 L3.5 4.5 Z" fill="#1e2b48"/></svg>
<svg style="left:878px;top:109px" width="16" height="18" viewBox="0 0 16 18">
 <defs><linearGradient id="bk" x1="0" y1="0" x2="1" y2="1"><stop offset="0" stop-color="#f8f8f8"/><stop offset="0.5" stop-color="#a8b0b8"/><stop offset="1" stop-color="#5a6470"/></linearGradient></defs>
 <path d="M1.5 6 L7 1.5 L12 7.5 L7 11.5 Q3 11 1.5 6Z" fill="url(#bk)" stroke="#3a4450" stroke-width="0.9"/>
 <path d="M2 4 Q3 1 6 1.2" stroke="#3a4450" stroke-width="0.9" fill="none"/>
 <path d="M8.5 1.5 Q13 3 13.5 10" stroke="#3a7ad0" stroke-width="1.6" fill="none"/>
 <rect x="0.8" y="14" width="14" height="3" fill="#000"/>
</svg>
<svg style="left:902px;top:116px" width="7" height="5" viewBox="0 0 7 5"><path d="M0 0.5 H7 L3.5 4.5 Z" fill="#1e2b48"/></svg>
<div class="t" style="left:795px;top:145px;letter-spacing:-0.2px">Paragraph</div>
<svg style="left:911px;top:148px" width="7" height="7" viewBox="0 0 7 7"><path d="M7 0 V7 H0 Z" fill="#6a7a94"/></svg>

<!-- group: Styles -->
<div class="a" style="left:926px;top:70px;width:173px;height:66px;background:#fff;border:1px solid #b4bfd0"></div>
<div class="a" style="left:930px;top:75px;width:75px;height:56px;background:#fffdf6;border:1px solid #f0d48a"></div>
<div class="t" style="left:933px;top:90px;font-size:12.3px;color:#111">AaBbCcDdE</div>
<div class="t" style="left:942px;top:115px;font-size:12px;color:#111">&para; Normal</div>
<div class="a" style="left:1006px;top:76px;width:72px;height:54px;background:#fafbfd"></div>
<div class="t" style="left:1008px;top:90px;font-size:12.3px;color:#1a1ae6">AaBbCcDdE</div>
<div class="t" style="left:1017px;top:115px;font-size:12px;color:#111">Hyperlink</div>
<svg style="left:1087px;top:77px" width="8" height="5" viewBox="0 0 8 5"><path d="M0.5 4.5 H7.5 L4 0.5Z" fill="#b8c0ce"/></svg>
<svg style="left:1087px;top:100px" width="8" height="5" viewBox="0 0 8 5"><path d="M0.5 0.5 H7.5 L4 4.5Z" fill="#b8c0ce"/></svg>
<svg style="left:1087px;top:121px" width="8" height="7" viewBox="0 0 8 7"><rect x="0.5" y="0.5" width="7" height="1.2" fill="#8a96aa"/><path d="M0.5 2.5 H7.5 L4 6.5Z" fill="#8a96aa"/></svg>
<div class="t" style="left:995px;top:145px">Styles</div>
<svg style="left:1091px;top:148px" width="7" height="7" viewBox="0 0 7 7"><path d="M7 0 V7 H0 Z" fill="#6a7a94"/></svg>

<!-- group: Editing -->
<svg style="left:1111px;top:82px" width="16" height="12" viewBox="0 0 16 12">
 <path d="M1 8 L2.5 1.5 H6.5 L7 8 Z" fill="#8ea4c8" stroke="#3a5080" stroke-width="0.9"/>
 <path d="M9 8 L9.5 1.5 H13.5 L15 8 Z" fill="#8ea4c8" stroke="#3a5080" stroke-width="0.9"/>
 <ellipse cx="4" cy="8.5" rx="3.3" ry="3" fill="#dfe8f6" stroke="#3a5080" stroke-width="1"/>
 <ellipse cx="12" cy="8.5" rx="3.3" ry="3" fill="#dfe8f6" stroke="#3a5080" stroke-width="1"/>
 <rect x="6.5" y="3" width="3" height="3" fill="#3a5080"/>
</svg>
<div class="t" style="left:1133px;top:83px">Find</div>
<svg style="left:1111px;top:110px" width="17" height="17" viewBox="0 0 17 17">
 <path d="M2.5 9 Q3 2.5 8.5 2.5 Q13 2.5 13.5 6" stroke="#6a9ad8" stroke-width="2.6" fill="none"/>
 <path d="M2.5 9 Q3 2.5 8.5 2.5 Q13 2.5 13.5 6" stroke="#a8c8f0" stroke-width="1" fill="none"/>
 <path d="M10.5 5 H16.5 L14.5 0.5Z" fill="#4a7ac0"/>
 <text x="0" y="16.5" font-size="9" font-weight="bold" font-family="Liberation Sans" fill="#d02020">A</text>
 <text x="10" y="16.5" font-size="9" font-weight="bold" font-family="Liberation Sans" fill="#3a9a20">B</text>
</svg>
<div class="t" style="left:1133px;top:113px">Replace</div>
<div class="t" style="left:1127px;top:145px">Editing</div>
<svg style="left:1253px;top:146px" width="10" height="6" viewBox="0 0 10 6"><path d="M0.5 5.5 H9.5 L5 0.5 Z" fill="#1e2b48"/></svg>

<!-- ruler row -->
<div class="a" style="left:173px;top:162px;width:1108px;height:527px;background:#d6dbe9"></div>
<div class="a" style="left:179px;top:162px;width:1px;height:527px;background:#a8b2c2"></div>
<div class="a" style="left:185px;top:167px;width:13px;height:13px;background:#9eabbf"></div>
<svg style="left:186px;top:169px" width="9" height="9" viewBox="0 0 9 9"><path d="M2 1 V6 H6.2" stroke="#fff" stroke-width="1.9" fill="none"/></svg>
<div class="a" style="left:323px;top:167px;width:816px;height:13px;background:#cbd1de"></div>
<div class="a" style="left:323px;top:167px;width:114px;height:13px;background:#c3c9d7"></div>
<div class="a" style="left:1082px;top:167px;width:57px;height:13px;background:#c3c9d7"></div>
<!-- vertical ruler -->
<div class="a" style="left:185px;top:188px;width:13px;height:501px;background:#cbd1de"></div>
<div class="a" style="left:185px;top:188px;width:13px;height:76px;background:#c3c9d7"></div>

<!-- ruler ticks -->
<div class="a" style="left:329px;top:172px;width:1px;height:3px;background:#1e2838"></div>
<div class="t" style="left:338px;top:168px;font-size:10px;color:#2a3550;width:6px;text-align:center">1</div>
<div class="a" style="left:353px;top:172px;width:1px;height:3px;background:#1e2838"></div>
<div class="a" style="left:365px;top:172px;width:1px;height:3px;background:#1e2838"></div>
<div class="a" style="left:377px;top:172px;width:1px;height:3px;background:#1e2838"></div>
<div class="a" style="left:389px;top:171px;width:1px;height:6px;background:#1e2838"></div>
<div class="a" style="left:401px;top:172px;width:1px;height:3px;background:#1e2838"></div>
<div class="a" style="left:413px;top:172px;width:1px;height:3px;background:#1e2838"></div>
<div class="a" style="left:425px;top:172px;width:1px;height:3px;background:#1e2838"></div>
<div class="a" style="left:449px;top:172px;width:1px;height:3px;background:#1e2838"></div>
<div class="a" style="left:461px;top:172px;width:1px;height:3px;background:#1e2838"></div>
<div class="a" style="left:473px;top:172px;width:1px;height:3px;background:#1e2838"></div>
<div class="a" style="left:485px;top:171px;width:1px;height:6px;background:#1e2838"></div>
<div class="a" style="left:497px;top:172px;width:1px;height:3px;background:#1e2838"></div>
<div class="a" style="left:509px;top:172px;width:1px;height:3px;background:#1e2838"></div>
<div class="a" style="left:521px;top:172px;width:1px;height:3px;background:#1e2838"></div>
<div class="t" style="left:530px;top:168px;font-size:10px;color:#2a3550;width:6px;text-align:center">1</div>
<div class="a" style="left:545px;top:172px;width:1px;height:3px;background:#1e2838"></div>
<div class="a" style="left:557px;top:172px;width:1px;height:3px;background:#1e2838"></div>
<div class="a" style="left:569px;top:172px;width:1px;height:3px;background:#1e2838"></div>
<div class="a" style="left:581px;top:171px;width:1px;height:6px;background:#1e2838"></div>
<div class="a" style="left:593px;top:172px;width:1px;height:3px;background:#1e2838"></div>
<div class="a" style="left:605px;top:172px;width:1px;height:3px;background:#1e2838"></div>
<div class="a" style="left:617px;top:172px;width:1px;height:3px;background:#1e2838"></div>
<div class="t" style="left:626px;top:168px;font-size:10px;color:#2a3550;width:6px;text-align:center">2</div>
<div class="a" style="left:641px;top:172px;width:1px;height:3px;background:#1e2838"></div>
<div class="a" style="left:653px;top:172px;width:1px;height:3px;background:#1e2838"></div>
<div class="a" style="left:665px;top:172px;width:1px;height:3px;background:#1e2838"></div>
<div class="a" style="left:677px;top:171px;width:1px;height:6px;background:#1e2838"></div>
<div class="a" style="left:689px;top:172px;width:1px;height:3px;background:#1e2838"></div>
<div class="a" style="left:701px;top:172px;width:1px;height:3px;background:#1e2838"></div>
<div class="a" style="left:713px;top:172px;width:1px;height:3px;background:#1e2838"></div>
<div class="t" style="left:722px;top:168px;font-size:10px;color:#2a3550;width:6px;text-align:center">3</div>
<div class="a" style="left:737px;top:172px;width:1px;height:3px;background:#1e2838"></div>
<div class="a" style="left:749px;top:172px;width:1px;height:3px;background:#1e2838"></div>
<div class="a" style="left:761px;top:172px;width:1px;height:3px;background:#1e2838"></div>
<div class="a" style="left:773px;top:171px;width:1px;height:6px;background:#1e2838"></div>
<div class="a" style="left:785px;top:172px;width:1px;height:3px;background:#1e2838"></div>
<div class="a" style="left:797px;top:172px;width:1px;height:3px;background:#1e2838"></div>
<div class="a" style="left:809px;top:172px;width:1px;height:3px;background:#1e2838"></div>
<div class="t" style="left:818px;top:168px;font-size:10px;color:#2a3550;width:6px;text-align:center">4</div>
<div class="a" style="left:833px;top:172px;width:1px;height:3px;background:#1e2838"></div>
<div class="a" style="left:845px;top:172px;width:1px;height:3px;background:#1e2838"></div>
<div class="a" style="left:857px;top:172px;width:1px;height:3px;background:#1e2838"></div>
<div class="a" style="left:869px;top:171px;width:1px;height:6px;background:#1e2838"></div>
<div class="a" style="left:881px;top:172px;width:1px;height:3px;background:#1e2838"></div>
<div class="a" style="left:893px;top:172px;width:1px;height:3px;background:#1e2838"></div>
<div class="a" style="left:905px;top:172px;width:1px;height:3px;background:#1e2838"></div>
<div class="t" style="left:914px;top:168px;font-size:10px;color:#2a3550;width:6px;text-align:center">5</div>
<div class="a" style="left:929px;top:172px;width:1px;height:3px;background:#1e2838"></div>
<div class="a" style="left:941px;top:172px;width:1px;height:3px;background:#1e2838"></div>
<div class="a" style="left:953px;top:172px;width:1px;height:3px;background:#1e2838"></div>
<div class="a" style="left:965px;top:171px;width:1px;height:6px;background:#1e2838"></div>
<div class="a" style="left:977px;top:172px;width:1px;height:3px;background:#1e2838"></div>
<div class="a" style="left:989px;top:172px;width:1px;height:3px;background:#1e2838"></div>
<div class="a" style="left:1001px;top:172px;width:1px;height:3px;background:#1e2838"></div>
<div class="t" style="left:1010px;top:168px;font-size:10px;color:#2a3550;width:6px;text-align:center">6</div>
<div class="a" style="left:1025px;top:172px;width:1px;height:3px;background:#1e2838"></div>
<div class="a" style="left:1037px;top:172px;width:1px;height:3px;background:#1e2838"></div>
<div class="a" style="left:1049px;top:172px;width:1px;height:3px;background:#1e2838"></div>
<div class="a" style="left:1061px;top:171px;width:1px;height:6px;background:#1e2838"></div>
<div class="a" style="left:1073px;top:172px;width:1px;height:3px;background:#1e2838"></div>
<div class="a" style="left:1085px;top:172px;width:1px;height:3px;background:#1e2838"></div>
<div class="a" style="left:1097px;top:172px;width:1px;height:3px;background:#1e2838"></div>
<div class="t" style="left:1106px;top:168px;font-size:10px;color:#2a3550;width:6px;text-align:center">7</div>
<div class="a" style="left:1121px;top:172px;width:1px;height:3px;background:#1e2838"></div>
<div class="a" style="left:1133px;top:172px;width:1px;height:3px;background:#1e2838"></div>
<div class="a" style="left:190px;top:192px;width:3px;height:1px;background:#1e2838"></div>
<div class="a" style="left:190px;top:204px;width:3px;height:1px;background:#1e2838"></div>
<div class="a" style="left:189px;top:216px;width:6px;height:1px;background:#1e2838"></div>
<div class="a" style="left:190px;top:228px;width:3px;height:1px;background:#1e2838"></div>
<div class="a" style="left:190px;top:240px;width:3px;height:1px;background:#1e2838"></div>
<div class="a" style="left:190px;top:252px;width:3px;height:1px;background:#1e2838"></div>
<div class="t" style="left:186px;top:257px;font-size:10px;color:#2a3550;width:10px;height:10px;text-align:center;line-height:10px;transform:rotate(-90deg)">0</div>
<div class="a" style="left:190px;top:276px;width:3px;height:1px;background:#1e2838"></div>
<div class="a" style="left:190px;top:288px;width:3px;height:1px;background:#1e2838"></div>
<div class="a" style="left:190px;top:300px;width:3px;height:1px;background:#1e2838"></div>
<div class="a" style="left:189px;top:312px;width:6px;height:1px;background:#1e2838"></div>
<div class="a" style="left:190px;top:324px;width:3px;height:1px;background:#1e2838"></div>
<div class="a" style="left:190px;top:336px;width:3px;height:1px;background:#1e2838"></div>
<div class="a" style="left:190px;top:348px;width:3px;height:1px;background:#1e2838"></div>
<div class="t" style="left:186px;top:353px;font-size:10px;color:#2a3550;width:10px;height:10px;text-align:center;line-height:10px;transform:rotate(-90deg)">1</div>
<div class="a" style="left:190px;top:372px;width:3px;height:1px;background:#1e2838"></div>
<div class="a" style="left:190px;top:384px;width:3px;height:1px;background:#1e2838"></div>
<div class="a" style="left:190px;top:396px;width:3px;height:1px;background:#1e2838"></div>
<div class="a" style="left:189px;top:408px;width:6px;height:1px;background:#1e2838"></div>
<div class="a" style="left:190px;top:420px;width:3px;height:1px;background:#1e2838"></div>
<div class="a" style="left:190px;top:432px;width:3px;height:1px;background:#1e2838"></div>
<div class="a" style="left:190px;top:444px;width:3px;height:1px;background:#1e2838"></div>
<div class="t" style="left:186px;top:449px;font-size:10px;color:#2a3550;width:10px;height:10px;text-align:center;line-height:10px;transform:rotate(-90deg)">2</div>
<div class="a" style="left:190px;top:468px;width:3px;height:1px;background:#1e2838"></div>
<div class="a" style="left:190px;top:480px;width:3px;height:1px;background:#1e2838"></div>
<div class="a" style="left:190px;top:492px;width:3px;height:1px;background:#1e2838"></div>
<div class="a" style="left:189px;top:504px;width:6px;height:1px;background:#1e2838"></div>
<div class="a" style="left:190px;top:516px;width:3px;height:1px;background:#1e2838"></div>
<div class="a" style="left:190px;top:528px;width:3px;height:1px;background:#1e2838"></div>
<div class="a" style="left:190px;top:540px;width:3px;height:1px;background:#1e2838"></div>
<div class="t" style="left:186px;top:545px;font-size:10px;color:#2a3550;width:10px;height:10px;text-align:center;line-height:10px;transform:rotate(-90deg)">3</div>
<div class="a" style="left:190px;top:564px;width:3px;height:1px;background:#1e2838"></div>
<div class="a" style="left:190px;top:576px;width:3px;height:1px;background:#1e2838"></div>
<div class="a" style="left:190px;top:588px;width:3px;height:1px;background:#1e2838"></div>
<div class="a" style="left:189px;top:600px;width:6px;height:1px;background:#1e2838"></div>
<div class="a" style="left:190px;top:612px;width:3px;height:1px;background:#1e2838"></div>
<div class="a" style="left:190px;top:624px;width:3px;height:1px;background:#1e2838"></div>
<div class="a" style="left:190px;top:636px;width:3px;height:1px;background:#1e2838"></div>
<div class="t" style="left:186px;top:641px;font-size:10px;color:#2a3550;width:10px;height:10px;text-align:center;line-height:10px;transform:rotate(-90deg)">4</div>
<div class="a" style="left:190px;top:660px;width:3px;height:1px;background:#1e2838"></div>
<div class="a" style="left:190px;top:672px;width:3px;height:1px;background:#1e2838"></div>
<div class="a" style="left:190px;top:684px;width:3px;height:1px;background:#1e2838"></div>
<svg style="left:432px;top:164px" width="11" height="21" viewBox="0 0 11 21">
 <path d="M1 1 H10 V2 L5.5 8.5 L10 15 V15.5 H1 V15 L5.5 8.5 L1 2 Z" fill="#fafbfd" stroke="#5a6a88" stroke-width="1"/>
 <rect x="1" y="15.5" width="9" height="5" fill="#fafbfd" stroke="#5a6a88" stroke-width="1"/>
</svg>
<svg style="left:1077px;top:172px" width="11" height="8" viewBox="0 0 11 8"><path d="M1 7.5 V5 L5.5 0.8 L10 5 V7.5 Z" fill="#fafbfd" stroke="#5a6a88" stroke-width="1"/></svg>
<!-- doc area -->
<div class="a" style="left:203px;top:185px;width:1054px;height:504px;background:linear-gradient(#2b3a57 0%,#34476a 45%,#2b3a57 100%)"></div>
<div class="a" style="left:322px;top:187px;width:816px;height:502px;background:#fff;border-left:1px solid #000;border-top:1px solid #000;border-right:1px solid #000"></div>
<div class="t" style="left:436px;top:266px;font-size:13.6px;color:#000">This is a full featured word processor</div>
<!-- scrollbar -->
<div class="a" style="left:1257px;top:162px;width:17px;height:527px;background:#cdd3e0"></div>
<div class="a" style="left:1274px;top:162px;width:1px;height:527px;background:#a8b2c2"></div>
<svg style="left:1261px;top:167px" width="9" height="5" viewBox="0 0 9 5"><path d="M0.5 4.5 H8.5 L4.5 0.5Z" fill="#6a7a94"/></svg>
<div class="a" style="left:1261px;top:179px;width:9px;height:235px;background:#9aa6b8"></div>
<svg style="left:1261px;top:679px" width="9" height="5" viewBox="0 0 9 5"><path d="M0.5 0.5 H8.5 L4.5 4.5Z" fill="#6a7a94"/></svg>
<!-- bottom bar -->
<div class="a" style="left:173px;top:689px;width:1108px;height:1px;background:#9aa6b8"></div>
<div class="a" style="left:173px;top:690px;width:1108px;height:23px;background:#283754"></div>
<svg style="left:1265px;top:700px" width="11" height="11" viewBox="0 0 11 11"><g fill="#b4bfd2"><rect x="8" y="2" width="1.6" height="1.6"/><rect x="8" y="5" width="1.6" height="1.6"/><rect x="5" y="5" width="1.6" height="1.6"/><rect x="8" y="8" width="1.6" height="1.6"/><rect x="5" y="8" width="1.6" height="1.6"/><rect x="2" y="8" width="1.6" height="1.6"/></g></svg>

</body></html>
